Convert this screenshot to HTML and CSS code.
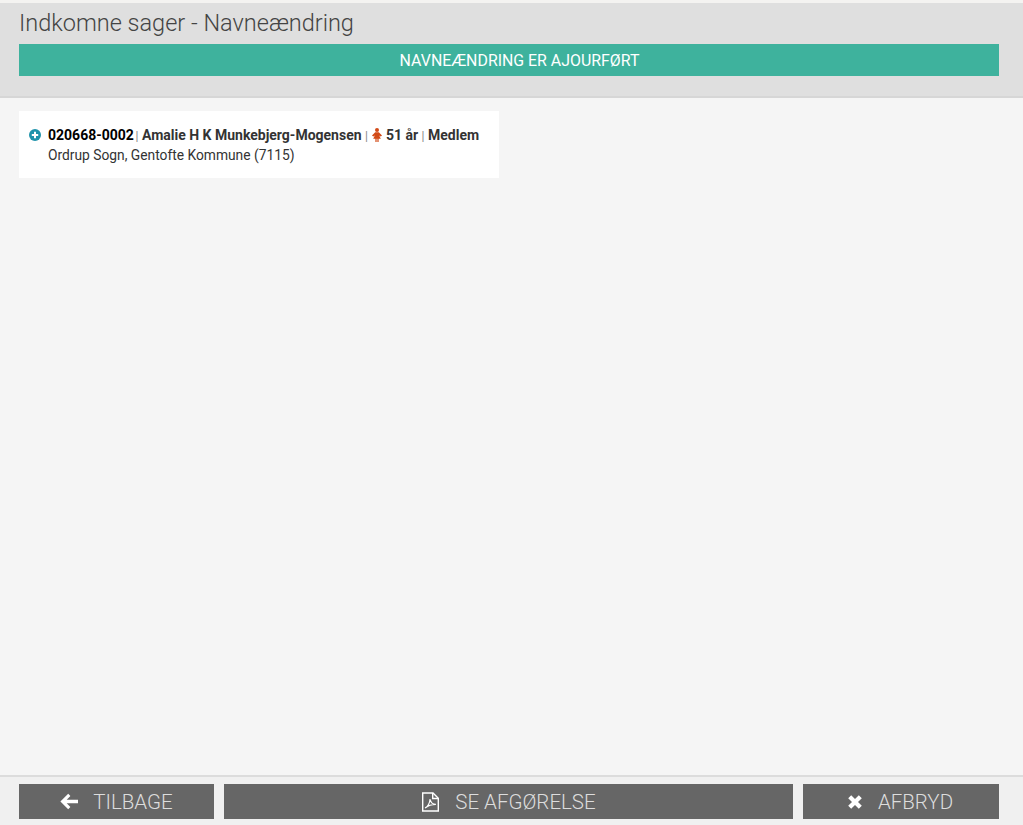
FILE: index.html
```html
<!DOCTYPE html>
<html lang="da">
<head>
    <meta charset="UTF-8">
    <meta name="viewport" content="width=device-width, initial-scale=1.0">
    <title>Indkomne sager - Navneændring</title>
    <link rel="stylesheet" href="styles.css">
</head>
<body>
    <header class="top">
        <h1>Indkomne sager - Navneændring</h1>
        <div class="banner">NAVNEÆNDRING ER AJOURFØRT</div>
    </header>

    <main class="content">
        <div class="card">
            <svg class="expand" viewBox="0 0 12 12" width="12" height="12">
                <circle cx="6" cy="6" r="6" fill="#1f93ab"/>
                <path d="M5 2.800h2V5h2.200v2H7v2.200H5V7H2.800V5H5z" fill="#fff"/>
            </svg>
            <div class="person">
                <div class="line-one"><span class="cpr">020668-0002</span> <span class="sep">|</span> Amalie H K Munkebjerg-Mogensen <span class="sep">|</span>
                    <svg class="gender" viewBox="0 0 10 14" width="10" height="14">
                        <circle cx="5" cy="2" r="2" fill="#d24a17"/>
                        <path d="M3.200 4.200h3.600L10 7.600 8.800 8.600 7.200 7.400 8.800 10.800H6.600V14H5.400v-3.200h-.8V14H3.400v-3.200H1.200L2.800 7.400 1.200 8.600 0 7.600z" fill="#d24a17"/>
                    </svg>
                    51 år <span class="sep">|</span> Medlem</div>
                <div class="line-two">Ordrup Sogn, Gentofte Kommune (7115)</div>
            </div>
        </div>
    </main>

    <footer class="bottom">
        <button class="btn btn-back">
            <svg viewBox="0 0 18 16" width="18" height="17"><path d="M8.200 0.200l2.200 2.200-3.700 3.800H18v3.600H6.700l3.700 3.800-2.200 2.200L0.400 8z" fill="#fff"/></svg>
            TILBAGE
        </button>
        <button class="btn btn-main">
            <svg viewBox="0 0 18 20" width="19" height="20" fill="none" stroke="#fff" stroke-width="1.400"><path d="M1.200 1h10.300l5.300 5.200V19H1.200z"/><path d="M11.200 1v5.500h5.600"/><path d="M3.600 16c2.600-1.400 4.600-5 5-9 .6 3.400 2.600 5.400 5.800 5.400-3.600 0-7.400 1-10.800 3.600z" stroke-width="1.200"/></svg>
            SE AFGØRELSE
        </button>
        <button class="btn btn-cancel">
            <svg viewBox="0 0 16 16" width="16" height="16"><path d="M4.200 1.200L8 5l3.800-3.800 3 3L11 8l3.800 3.800-3 3L8 11l-3.800 3.800-3-3L5 8 1.200 4.200z" fill="#fff"/></svg>
            AFBRYD
        </button>
    </footer>
</body>
</html>
```

FILE: styles.css
```css
html, body {
    height: 100%;
}
body {
    margin: 0;
    padding-top: 3px;
    box-sizing: border-box;
    height: 825px;
    display: flex;
    flex-direction: column;
    font-family: Roboto, "Liberation Sans", sans-serif;
    background-color: #f4f3f1;
    color: #333;
    overflow: hidden;
}
.top {
    background-color: #dfdfdf;
    border-bottom: 2px solid #d6d6d6;
    padding: 0 24px 20px 19px;
    height: 95px;
    box-sizing: border-box;
}
.top h1 {
    margin: 0;
    padding-top: 6px;
    height: 41px;
    box-sizing: border-box;
    font-size: 23.5px;
    line-height: 29px;
    font-weight: 300;
    color: #444;
}
.banner {
    background-color: #3eb29d;
    color: #fff;
    height: 32px;
    line-height: 33px;
    padding-left: 21px;
    text-align: center;
    font-size: 15.9px;
}
.content {
    flex: 1;
    background-color: #f5f5f5;
    padding: 13px 19px;
}
.card {
    width: 480px;
    height: 67px;
    box-sizing: border-box;
    background-color: #fff;
    padding: 14px 10px;
    display: flex;
    gap: 7px;
    font-size: 14px;
    line-height: 20px;
}
.expand {
    margin-top: 4px;
    flex-shrink: 0;
}
.line-one {
    font-weight: 700;
    white-space: nowrap;
}
.line-two {
    font-size: 13.8px;
    line-height: 18px;
}
.cpr {
    color: #000;
    margin-right: -1.8px;
}
.sep {
    font-size: 12px;
    font-weight: 400;
    color: #888;
}
.gender {
    margin-left: 1px;
    vertical-align: -2px;
}
.bottom {
    height: 50px;
    box-sizing: border-box;
    background-color: #f0f0f0;
    border-top: 2px solid #dcdcdc;
    padding: 7px 24px 6px 19px;
    display: flex;
    gap: 10px;
}
.btn {
    border: none;
    background-color: #666;
    color: #ddd;
    font-family: inherit;
    font-size: 20.5px;
    font-weight: 300;
    display: flex;
    align-items: center;
    justify-content: center;
    gap: 15px;
    padding: 0;
}
.btn-back {
    width: 195px;
}
.btn-cancel {
    width: 196px;
    padding-right: 2px;
}
.btn-main {
    flex: 1;
}
```
